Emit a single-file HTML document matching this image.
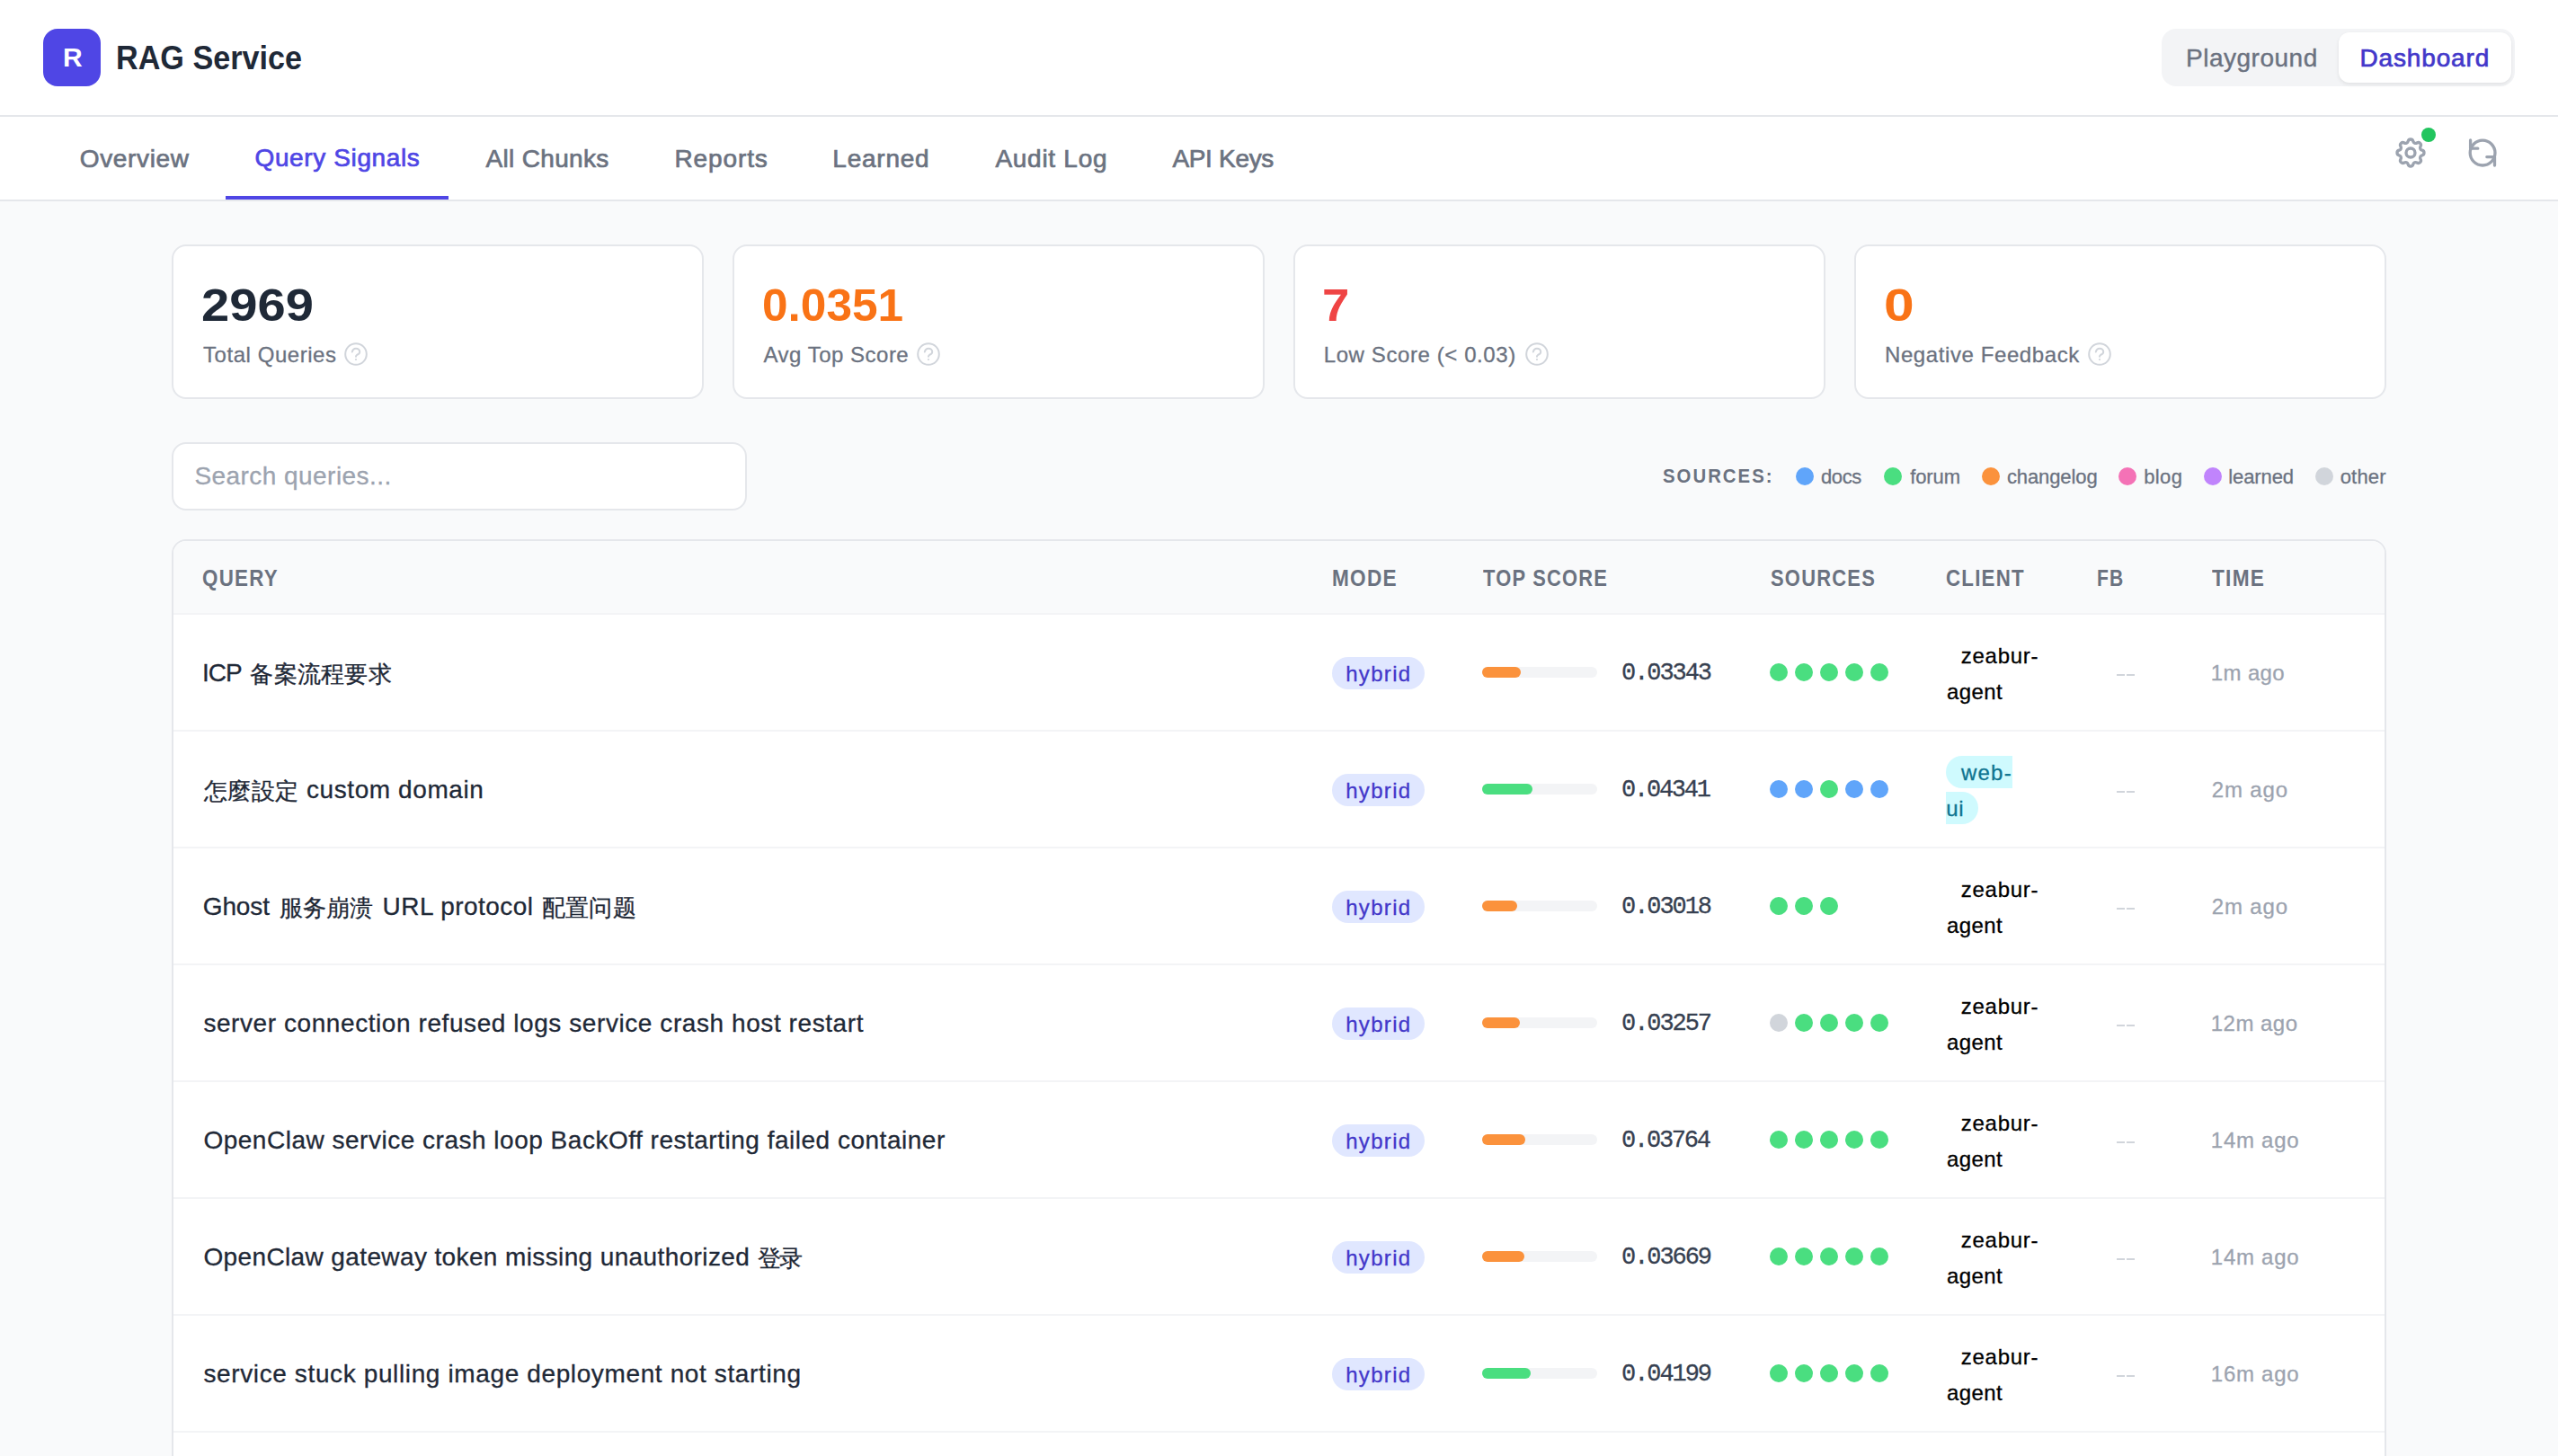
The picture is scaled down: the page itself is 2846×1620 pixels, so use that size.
<!DOCTYPE html>
<html><head><meta charset="utf-8"><title>RAG Service</title>
<style>
html{zoom:1;}
@media (min-width:2000px){html{zoom:2;}}
body{margin:0;width:1423px;height:810px;overflow:hidden;background:#f9fafb;position:relative;font-family:"Liberation Sans",sans-serif;}
.a{position:absolute;}
.t{position:absolute;white-space:nowrap;}
</style></head><body>
<div class="a" style="left:0px;top:0px;width:1423px;height:64px;background:#fff;"></div>
<div class="a" style="left:0px;top:64px;width:1423px;height:1px;background:#e5e7eb;"></div>
<div class="a" style="left:24px;top:16px;width:32px;height:32px;background:#4f46e5;border-radius:8px;"></div>
<div class="t" id="t1" style="left:35.05px;top:24.50px;font-size:15px;line-height:15px;color:#fff;font-weight:700;">R</div>
<div class="t" id="t2" style="left:64.50px;top:23.56px;font-size:18px;line-height:18px;color:#1f2937;font-weight:700;transform:scaleX(0.9493);transform-origin:0 0;">RAG Service</div>
<div class="a" style="left:1202.5px;top:16px;width:196.5px;height:32px;background:#f3f4f6;border-radius:8px;"></div>
<div class="a" style="left:1301px;top:18px;width:96px;height:28px;background:#fff;border-radius:6px;box-shadow:0 1px 2px rgba(0,0,0,0.08);"></div>
<div class="t" id="t3" style="left:1216.00px;top:25.45px;font-size:14px;line-height:14px;color:#6b7280;letter-spacing:0.256px;-webkit-text-stroke:0.2px #6b7280;">Playground</div>
<div class="t" id="t4" style="left:1312.75px;top:25.45px;font-size:14px;line-height:14px;color:#4338ca;letter-spacing:0.425px;-webkit-text-stroke:0.35px #4338ca;">Dashboard</div>
<div class="a" style="left:0px;top:65px;width:1423px;height:46px;background:#fff;"></div>
<div class="a" style="left:0px;top:111px;width:1423px;height:1px;background:#e5e7eb;"></div>
<div class="t" id="t5" style="left:44.38px;top:81.55px;font-size:14px;line-height:14px;color:#6b7280;letter-spacing:0.321px;-webkit-text-stroke:0.35px #6b7280;">Overview</div>
<div class="t" id="t6" style="left:141.75px;top:80.95px;font-size:14px;line-height:14px;color:#4f46e5;letter-spacing:0.312px;-webkit-text-stroke:0.35px #4f46e5;">Query Signals</div>
<div class="t" id="t7" style="left:270.25px;top:81.55px;font-size:14px;line-height:14px;color:#6b7280;letter-spacing:0.167px;-webkit-text-stroke:0.35px #6b7280;">All Chunks</div>
<div class="t" id="t8" style="left:375.20px;top:81.55px;font-size:14px;line-height:14px;color:#6b7280;letter-spacing:0.450px;-webkit-text-stroke:0.35px #6b7280;">Reports</div>
<div class="t" id="t9" style="left:463.15px;top:81.55px;font-size:14px;line-height:14px;color:#6b7280;letter-spacing:0.383px;-webkit-text-stroke:0.35px #6b7280;">Learned</div>
<div class="t" id="t10" style="left:553.70px;top:81.55px;font-size:14px;line-height:14px;color:#6b7280;letter-spacing:0.363px;-webkit-text-stroke:0.35px #6b7280;">Audit Log</div>
<div class="t" id="t11" style="left:652.20px;top:81.55px;font-size:14px;line-height:14px;color:#6b7280;letter-spacing:-0.157px;-webkit-text-stroke:0.35px #6b7280;">API Keys</div>
<div class="a" style="left:125.5px;top:109px;width:124px;height:2px;background:#4f46e5;"></div>
<svg class="a" style="left:1331px;top:75px" width="20" height="20" viewBox="0 0 24 24" fill="none" stroke="#9ca3af" stroke-width="2" stroke-linecap="round" stroke-linejoin="round"><path d="M10.325 4.317c.426-1.756 2.924-1.756 3.35 0a1.724 1.724 0 002.573 1.066c1.543-.94 3.31.826 2.37 2.37a1.724 1.724 0 001.065 2.572c1.756.426 1.756 2.924 0 3.35a1.724 1.724 0 00-1.066 2.573c.94 1.543-.826 3.31-2.37 2.37a1.724 1.724 0 00-2.572 1.065c-.426 1.756-2.924 1.756-3.35 0a1.724 1.724 0 00-2.573-1.066c-1.543.94-3.31-.826-2.37-2.37a1.724 1.724 0 00-1.065-2.572c-1.756-.426-1.756-2.924 0-3.35a1.724 1.724 0 001.066-2.573c-.94-1.543.826-3.31 2.37-2.37.996.608 2.296.07 2.572-1.065z"/><path d="M15 12a3 3 0 11-6 0 3 3 0 016 0z"/></svg>
<div class="a" style="left:1347px;top:71px;width:8px;height:8px;background:#22c55e;border-radius:50%;"></div>
<svg class="a" style="left:1371px;top:75px" width="20" height="20" viewBox="0 0 20 20" fill="none" stroke="#9ca3af" stroke-width="1.65" stroke-linecap="round" stroke-linejoin="round"><circle cx="10.05" cy="10.05" r="6.95"/><path d="M3.3 2.95V7.6H7.4"/><path d="M16.75 17V12.3H12.4"/></svg>
<div class="a" style="left:95.5px;top:136px;width:296px;height:86px;background:#fff;border:1px solid #e5e7eb;border-radius:8px;box-sizing:border-box;"></div>
<div class="t" id="t12" style="left:112.15px;top:157.33px;font-size:25px;line-height:25px;color:#1f2937;font-weight:700;transform:scaleX(1.1225);transform-origin:0 0;">2969</div>
<div class="t" id="t13" style="left:113.00px;top:191.39px;font-size:12px;line-height:12px;color:#6b7280;letter-spacing:0.275px;-webkit-text-stroke:0.15px #6b7280;">Total Queries</div>
<svg class="a" style="left:190.025px;top:188.95px" width="16" height="16" viewBox="-8 -8 16 16" fill="none" stroke="#d1d5db" stroke-width="1" stroke-linecap="round"><circle cx="0" cy="0" r="5.9"/><path d="M-2.1 -1.2C-1.8 -2.5 -1 -3.1 0 -3.1C1.2 -3.1 2.1 -2.3 2.1 -1.3C2.1 -0.4 1.4 0.1 0.6 0.4C0.2 0.6 0 0.9 0 1.4"/><circle cx="0" cy="3" r="0.55" fill="#d1d5db" stroke="none"/></svg>
<div class="a" style="left:407.5px;top:136px;width:296px;height:86px;background:#fff;border:1px solid #e5e7eb;border-radius:8px;box-sizing:border-box;"></div>
<div class="t" id="t14" style="left:424.00px;top:157.33px;font-size:25px;line-height:25px;color:#f97316;font-weight:700;transform:scaleX(1.0277);transform-origin:0 0;">0.0351</div>
<div class="t" id="t15" style="left:424.75px;top:191.39px;font-size:12px;line-height:12px;color:#6b7280;letter-spacing:0.250px;-webkit-text-stroke:0.15px #6b7280;">Avg Top Score</div>
<svg class="a" style="left:508.5px;top:188.95px" width="16" height="16" viewBox="-8 -8 16 16" fill="none" stroke="#d1d5db" stroke-width="1" stroke-linecap="round"><circle cx="0" cy="0" r="5.9"/><path d="M-2.1 -1.2C-1.8 -2.5 -1 -3.1 0 -3.1C1.2 -3.1 2.1 -2.3 2.1 -1.3C2.1 -0.4 1.4 0.1 0.6 0.4C0.2 0.6 0 0.9 0 1.4"/><circle cx="0" cy="3" r="0.55" fill="#d1d5db" stroke="none"/></svg>
<div class="a" style="left:719.5px;top:136px;width:296px;height:86px;background:#fff;border:1px solid #e5e7eb;border-radius:8px;box-sizing:border-box;"></div>
<div class="t" id="t16" style="left:735.62px;top:157.33px;font-size:25px;line-height:25px;color:#ef4444;font-weight:700;transform:scaleX(1.0911);transform-origin:0 0;">7</div>
<div class="t" id="t17" style="left:736.38px;top:191.39px;font-size:12px;line-height:12px;color:#6b7280;letter-spacing:0.294px;-webkit-text-stroke:0.15px #6b7280;">Low Score (&lt; 0.03)</div>
<svg class="a" style="left:846.875px;top:188.95px" width="16" height="16" viewBox="-8 -8 16 16" fill="none" stroke="#d1d5db" stroke-width="1" stroke-linecap="round"><circle cx="0" cy="0" r="5.9"/><path d="M-2.1 -1.2C-1.8 -2.5 -1 -3.1 0 -3.1C1.2 -3.1 2.1 -2.3 2.1 -1.3C2.1 -0.4 1.4 0.1 0.6 0.4C0.2 0.6 0 0.9 0 1.4"/><circle cx="0" cy="3" r="0.55" fill="#d1d5db" stroke="none"/></svg>
<div class="a" style="left:1031.5px;top:136px;width:296px;height:86px;background:#fff;border:1px solid #e5e7eb;border-radius:8px;box-sizing:border-box;"></div>
<div class="t" id="t18" style="left:1048.00px;top:157.33px;font-size:25px;line-height:25px;color:#f97316;font-weight:700;transform:scaleX(1.2111);transform-origin:0 0;">0</div>
<div class="t" id="t19" style="left:1048.50px;top:191.39px;font-size:12px;line-height:12px;color:#6b7280;letter-spacing:0.297px;-webkit-text-stroke:0.15px #6b7280;">Negative Feedback</div>
<svg class="a" style="left:1159.875px;top:188.95px" width="16" height="16" viewBox="-8 -8 16 16" fill="none" stroke="#d1d5db" stroke-width="1" stroke-linecap="round"><circle cx="0" cy="0" r="5.9"/><path d="M-2.1 -1.2C-1.8 -2.5 -1 -3.1 0 -3.1C1.2 -3.1 2.1 -2.3 2.1 -1.3C2.1 -0.4 1.4 0.1 0.6 0.4C0.2 0.6 0 0.9 0 1.4"/><circle cx="0" cy="3" r="0.55" fill="#d1d5db" stroke="none"/></svg>
<div class="a" style="left:95.5px;top:246px;width:320px;height:38px;background:#fff;border:1px solid #e5e7eb;border-radius:8px;box-sizing:border-box;"></div>
<div class="t" id="t20" style="left:108.20px;top:258.15px;font-size:14px;line-height:14px;color:#9ca3af;letter-spacing:0.225px;-webkit-text-stroke:0.15px #9ca3af;">Search queries...</div>
<div class="t" id="t21" style="left:925.20px;top:259.39px;font-size:11px;line-height:11px;color:#6b7280;font-weight:700;letter-spacing:1.100px;transform:scaleX(0.9241);transform-origin:0 0;">SOURCES:</div>
<div class="a" style="left:998.9px;top:260px;width:10px;height:10px;background:#60a5fa;border-radius:50%;"></div>
<div class="t" id="t22" style="left:1013.00px;top:259.84px;font-size:11px;line-height:11px;color:#6b7280;letter-spacing:-0.200px;-webkit-text-stroke:0.15px #6b7280;">docs</div>
<div class="a" style="left:1048px;top:260px;width:10px;height:10px;background:#4ade80;border-radius:50%;"></div>
<div class="t" id="t23" style="left:1062.60px;top:259.84px;font-size:11px;line-height:11px;color:#6b7280;letter-spacing:-0.050px;-webkit-text-stroke:0.15px #6b7280;">forum</div>
<div class="a" style="left:1102.5px;top:260px;width:10px;height:10px;background:#fb923c;border-radius:50%;"></div>
<div class="t" id="t24" style="left:1116.45px;top:259.84px;font-size:11px;line-height:11px;color:#6b7280;letter-spacing:-0.050px;-webkit-text-stroke:0.15px #6b7280;">changelog</div>
<div class="a" style="left:1178.5px;top:260px;width:10px;height:10px;background:#f472b6;border-radius:50%;"></div>
<div class="t" id="t25" style="left:1192.65px;top:259.84px;font-size:11px;line-height:11px;color:#6b7280;letter-spacing:0.167px;-webkit-text-stroke:0.15px #6b7280;">blog</div>
<div class="a" style="left:1226px;top:260px;width:10px;height:10px;background:#c084fc;border-radius:50%;"></div>
<div class="t" id="t26" style="left:1239.65px;top:259.84px;font-size:11px;line-height:11px;color:#6b7280;letter-spacing:-0.050px;-webkit-text-stroke:0.15px #6b7280;">learned</div>
<div class="a" style="left:1288px;top:260px;width:10px;height:10px;background:#d1d5db;border-radius:50%;"></div>
<div class="t" id="t27" style="left:1301.85px;top:259.84px;font-size:11px;line-height:11px;color:#6b7280;letter-spacing:0.100px;-webkit-text-stroke:0.15px #6b7280;">other</div>
<div class="a" style="left:95.5px;top:300px;width:1232px;height:520px;background:#fff;border:1px solid #e5e7eb;border-radius:8px;box-sizing:border-box;overflow:hidden;"></div>
<div class="a" style="left:96.5px;top:301px;width:1230px;height:40px;background:#f9fafb;border-radius:7px 7px 0 0;"></div>
<div class="a" style="left:96.5px;top:341px;width:1230px;height:1px;background:#f3f4f6;"></div>
<div class="t" id="t28" style="left:112.60px;top:315.27px;font-size:12.5px;line-height:12.5px;color:#6b7280;font-weight:700;letter-spacing:0.700px;transform:scaleX(0.8947);transform-origin:0 0;">QUERY</div>
<div class="t" id="t29" style="left:740.88px;top:315.27px;font-size:12.5px;line-height:12.5px;color:#6b7280;font-weight:700;letter-spacing:0.700px;transform:scaleX(0.9039);transform-origin:0 0;">MODE</div>
<div class="t" id="t30" style="left:825.00px;top:315.27px;font-size:12.5px;line-height:12.5px;color:#6b7280;font-weight:700;letter-spacing:0.700px;transform:scaleX(0.8758);transform-origin:0 0;">TOP SCORE</div>
<div class="t" id="t31" style="left:985.00px;top:315.27px;font-size:12.5px;line-height:12.5px;color:#6b7280;font-weight:700;letter-spacing:0.700px;transform:scaleX(0.8770);transform-origin:0 0;">SOURCES</div>
<div class="t" id="t32" style="left:1082.38px;top:315.27px;font-size:12.5px;line-height:12.5px;color:#6b7280;font-weight:700;letter-spacing:0.700px;transform:scaleX(0.8907);transform-origin:0 0;">CLIENT</div>
<div class="t" id="t33" style="left:1166.38px;top:315.27px;font-size:12.5px;line-height:12.5px;color:#6b7280;font-weight:700;letter-spacing:0.700px;transform:scaleX(0.8414);transform-origin:0 0;">FB</div>
<div class="t" id="t34" style="left:1230.62px;top:315.27px;font-size:12.5px;line-height:12.5px;color:#6b7280;font-weight:700;letter-spacing:0.700px;transform:scaleX(0.9048);transform-origin:0 0;">TIME</div>
<div class="a" style="left:96.5px;top:406px;width:1230px;height:1px;background:#f3f4f6;"></div>
<div class="t" id="q0_0" style="left:112.55px;top:367.45px;font-size:14px;line-height:14px;color:#1f2937;letter-spacing:-0.550px;-webkit-text-stroke:0.15px #1f2937;">ICP</div>
<div class="t" id="q0_1" style="left:139.12px;top:368.29px;font-size:13px;line-height:13px;color:#1f2937;letter-spacing:0.150px;-webkit-text-stroke:0.15px #1f2937;">备案流程要求</div>
<div class="a" style="left:741px;top:365.5px;width:51.5px;height:18px;background:#e0e7ff;border-radius:9px;"></div>
<div class="t" id="h0" style="left:748.60px;top:369.19px;font-size:12px;line-height:12px;color:#4338ca;letter-spacing:0.660px;-webkit-text-stroke:0.15px #4338ca;">hybrid</div>
<div class="a" style="left:824.5px;top:371px;width:64px;height:6px;background:#f3f4f6;border-radius:3px;"></div>
<div class="a" style="left:824.5px;top:371px;width:21.4px;height:6px;background:#fb923c;border-radius:3px;"></div>
<div class="t" id="s0" style="left:902.00px;top:368.16px;font-size:13.5px;line-height:13.5px;color:#374151;font-family:'Liberation Mono',monospace;letter-spacing:-1.033px;-webkit-text-stroke:0.15px #374151;">0.03343</div>
<div class="a" style="left:984.5px;top:369px;width:10px;height:10px;background:#4ade80;border-radius:50%;"></div>
<div class="a" style="left:998.5px;top:369px;width:10px;height:10px;background:#4ade80;border-radius:50%;"></div>
<div class="a" style="left:1012.5px;top:369px;width:10px;height:10px;background:#4ade80;border-radius:50%;"></div>
<div class="a" style="left:1026.5px;top:369px;width:10px;height:10px;background:#4ade80;border-radius:50%;"></div>
<div class="a" style="left:1040.5px;top:369px;width:10px;height:10px;background:#4ade80;border-radius:50%;"></div>
<div class="t" id="z0" style="left:1090.85px;top:359.14px;font-size:12px;line-height:12px;color:#000;letter-spacing:0.375px;-webkit-text-stroke:0.15px #000;">zeabur-</div>
<div class="t" id="a0" style="left:1083.00px;top:379.14px;font-size:12px;line-height:12px;color:#000;letter-spacing:0.188px;-webkit-text-stroke:0.15px #000;">agent</div>
<div class="a" style="left:1177.55px;top:374.97px;width:4.35px;height:1.05px;background:#d1d5db;"></div>
<div class="a" style="left:1183.1px;top:374.97px;width:4.35px;height:1.05px;background:#d1d5db;"></div>
<div class="t" id="tm0" style="left:1229.90px;top:368.54px;font-size:12px;line-height:12px;color:#9ca3af;letter-spacing:0.180px;-webkit-text-stroke:0.15px #9ca3af;">1m ago</div>
<div class="a" style="left:96.5px;top:471px;width:1230px;height:1px;background:#f3f4f6;"></div>
<div class="t" id="q1_0" style="left:113.38px;top:433.29px;font-size:13px;line-height:13px;color:#1f2937;letter-spacing:0.217px;-webkit-text-stroke:0.15px #1f2937;">怎麼設定</div>
<div class="t" id="q1_1" style="left:170.50px;top:432.45px;font-size:14px;line-height:14px;color:#1f2937;letter-spacing:0.292px;-webkit-text-stroke:0.15px #1f2937;">custom domain</div>
<div class="a" style="left:741px;top:430.5px;width:51.5px;height:18px;background:#e0e7ff;border-radius:9px;"></div>
<div class="t" id="h1" style="left:748.60px;top:434.19px;font-size:12px;line-height:12px;color:#4338ca;letter-spacing:0.660px;-webkit-text-stroke:0.15px #4338ca;">hybrid</div>
<div class="a" style="left:824.5px;top:436px;width:64px;height:6px;background:#f3f4f6;border-radius:3px;"></div>
<div class="a" style="left:824.5px;top:436px;width:27.78px;height:6px;background:#4ade80;border-radius:3px;"></div>
<div class="t" id="s1" style="left:902.00px;top:433.16px;font-size:13.5px;line-height:13.5px;color:#374151;font-family:'Liberation Mono',monospace;letter-spacing:-1.117px;-webkit-text-stroke:0.15px #374151;">0.04341</div>
<div class="a" style="left:984.5px;top:434px;width:10px;height:10px;background:#60a5fa;border-radius:50%;"></div>
<div class="a" style="left:998.5px;top:434px;width:10px;height:10px;background:#60a5fa;border-radius:50%;"></div>
<div class="a" style="left:1012.5px;top:434px;width:10px;height:10px;background:#4ade80;border-radius:50%;"></div>
<div class="a" style="left:1026.5px;top:434px;width:10px;height:10px;background:#60a5fa;border-radius:50%;"></div>
<div class="a" style="left:1040.5px;top:434px;width:10px;height:10px;background:#60a5fa;border-radius:50%;"></div>
<div class="a" style="left:1082.6px;top:420.5px;width:36.8px;height:17.8px;background:#cffafe;border-radius:9px 0 0 9px;"></div>
<div class="a" style="left:1082.6px;top:440.6px;width:17.8px;height:17.8px;background:#cffafe;border-radius:0 9px 9px 0;"></div>
<div class="t" id="web" style="left:1091.00px;top:424.14px;font-size:12px;line-height:12px;color:#0e7490;letter-spacing:0.600px;-webkit-text-stroke:0.15px #0e7490;">web-</div>
<div class="t" id="ui" style="left:1082.60px;top:444.14px;font-size:12px;line-height:12px;color:#0e7490;letter-spacing:0.400px;-webkit-text-stroke:0.15px #0e7490;">ui</div>
<div class="a" style="left:1177.55px;top:439.97px;width:4.35px;height:1.05px;background:#d1d5db;"></div>
<div class="a" style="left:1183.1px;top:439.97px;width:4.35px;height:1.05px;background:#d1d5db;"></div>
<div class="t" id="tm1" style="left:1230.40px;top:433.54px;font-size:12px;line-height:12px;color:#9ca3af;letter-spacing:0.420px;-webkit-text-stroke:0.15px #9ca3af;">2m ago</div>
<div class="a" style="left:96.5px;top:536px;width:1230px;height:1px;background:#f3f4f6;"></div>
<div class="t" id="q2_0" style="left:112.88px;top:497.45px;font-size:14px;line-height:14px;color:#1f2937;letter-spacing:-0.062px;-webkit-text-stroke:0.15px #1f2937;">Ghost</div>
<div class="t" id="q2_1" style="left:155.50px;top:498.29px;font-size:13px;line-height:13px;color:#1f2937;letter-spacing:0.083px;-webkit-text-stroke:0.15px #1f2937;">服务崩溃</div>
<div class="t" id="q2_2" style="left:212.75px;top:497.45px;font-size:14px;line-height:14px;color:#1f2937;letter-spacing:0.236px;-webkit-text-stroke:0.15px #1f2937;">URL protocol</div>
<div class="t" id="q2_3" style="left:301.25px;top:498.29px;font-size:13px;line-height:13px;color:#1f2937;letter-spacing:0.200px;-webkit-text-stroke:0.15px #1f2937;">配置问题</div>
<div class="a" style="left:741px;top:495.5px;width:51.5px;height:18px;background:#e0e7ff;border-radius:9px;"></div>
<div class="t" id="h2" style="left:748.60px;top:499.19px;font-size:12px;line-height:12px;color:#4338ca;letter-spacing:0.660px;-webkit-text-stroke:0.15px #4338ca;">hybrid</div>
<div class="a" style="left:824.5px;top:501px;width:64px;height:6px;background:#f3f4f6;border-radius:3px;"></div>
<div class="a" style="left:824.5px;top:501px;width:19.32px;height:6px;background:#fb923c;border-radius:3px;"></div>
<div class="t" id="s2" style="left:902.00px;top:498.16px;font-size:13.5px;line-height:13.5px;color:#374151;font-family:'Liberation Mono',monospace;letter-spacing:-1.033px;-webkit-text-stroke:0.15px #374151;">0.03018</div>
<div class="a" style="left:984.5px;top:499px;width:10px;height:10px;background:#4ade80;border-radius:50%;"></div>
<div class="a" style="left:998.5px;top:499px;width:10px;height:10px;background:#4ade80;border-radius:50%;"></div>
<div class="a" style="left:1012.5px;top:499px;width:10px;height:10px;background:#4ade80;border-radius:50%;"></div>
<div class="t" id="z2" style="left:1090.85px;top:489.14px;font-size:12px;line-height:12px;color:#000;letter-spacing:0.375px;-webkit-text-stroke:0.15px #000;">zeabur-</div>
<div class="t" id="a2" style="left:1083.00px;top:509.14px;font-size:12px;line-height:12px;color:#000;letter-spacing:0.188px;-webkit-text-stroke:0.15px #000;">agent</div>
<div class="a" style="left:1177.55px;top:504.97px;width:4.35px;height:1.05px;background:#d1d5db;"></div>
<div class="a" style="left:1183.1px;top:504.97px;width:4.35px;height:1.05px;background:#d1d5db;"></div>
<div class="t" id="tm2" style="left:1230.40px;top:498.54px;font-size:12px;line-height:12px;color:#9ca3af;letter-spacing:0.420px;-webkit-text-stroke:0.15px #9ca3af;">2m ago</div>
<div class="a" style="left:96.5px;top:601px;width:1230px;height:1px;background:#f3f4f6;"></div>
<div class="t" id="q3_0" style="left:113.20px;top:562.45px;font-size:14px;line-height:14px;color:#1f2937;letter-spacing:0.287px;-webkit-text-stroke:0.15px #1f2937;">server connection refused logs service crash host restart</div>
<div class="a" style="left:741px;top:560.5px;width:51.5px;height:18px;background:#e0e7ff;border-radius:9px;"></div>
<div class="t" id="h3" style="left:748.60px;top:564.19px;font-size:12px;line-height:12px;color:#4338ca;letter-spacing:0.660px;-webkit-text-stroke:0.15px #4338ca;">hybrid</div>
<div class="a" style="left:824.5px;top:566px;width:64px;height:6px;background:#f3f4f6;border-radius:3px;"></div>
<div class="a" style="left:824.5px;top:566px;width:20.84px;height:6px;background:#fb923c;border-radius:3px;"></div>
<div class="t" id="s3" style="left:902.00px;top:563.16px;font-size:13.5px;line-height:13.5px;color:#374151;font-family:'Liberation Mono',monospace;letter-spacing:-1.033px;-webkit-text-stroke:0.15px #374151;">0.03257</div>
<div class="a" style="left:984.5px;top:564px;width:10px;height:10px;background:#d1d5db;border-radius:50%;"></div>
<div class="a" style="left:998.5px;top:564px;width:10px;height:10px;background:#4ade80;border-radius:50%;"></div>
<div class="a" style="left:1012.5px;top:564px;width:10px;height:10px;background:#4ade80;border-radius:50%;"></div>
<div class="a" style="left:1026.5px;top:564px;width:10px;height:10px;background:#4ade80;border-radius:50%;"></div>
<div class="a" style="left:1040.5px;top:564px;width:10px;height:10px;background:#4ade80;border-radius:50%;"></div>
<div class="t" id="z3" style="left:1090.85px;top:554.14px;font-size:12px;line-height:12px;color:#000;letter-spacing:0.375px;-webkit-text-stroke:0.15px #000;">zeabur-</div>
<div class="t" id="a3" style="left:1083.00px;top:574.14px;font-size:12px;line-height:12px;color:#000;letter-spacing:0.188px;-webkit-text-stroke:0.15px #000;">agent</div>
<div class="a" style="left:1177.55px;top:569.97px;width:4.35px;height:1.05px;background:#d1d5db;"></div>
<div class="a" style="left:1183.1px;top:569.97px;width:4.35px;height:1.05px;background:#d1d5db;"></div>
<div class="t" id="tm3" style="left:1229.90px;top:563.54px;font-size:12px;line-height:12px;color:#9ca3af;letter-spacing:0.233px;-webkit-text-stroke:0.15px #9ca3af;">12m ago</div>
<div class="a" style="left:96.5px;top:666px;width:1230px;height:1px;background:#f3f4f6;"></div>
<div class="t" id="q4_0" style="left:113.20px;top:627.45px;font-size:14px;line-height:14px;color:#1f2937;letter-spacing:0.255px;-webkit-text-stroke:0.15px #1f2937;">OpenClaw service crash loop BackOff restarting failed container</div>
<div class="a" style="left:741px;top:625.5px;width:51.5px;height:18px;background:#e0e7ff;border-radius:9px;"></div>
<div class="t" id="h4" style="left:748.60px;top:629.19px;font-size:12px;line-height:12px;color:#4338ca;letter-spacing:0.660px;-webkit-text-stroke:0.15px #4338ca;">hybrid</div>
<div class="a" style="left:824.5px;top:631px;width:64px;height:6px;background:#f3f4f6;border-radius:3px;"></div>
<div class="a" style="left:824.5px;top:631px;width:24.09px;height:6px;background:#fb923c;border-radius:3px;"></div>
<div class="t" id="s4" style="left:902.00px;top:628.16px;font-size:13.5px;line-height:13.5px;color:#374151;font-family:'Liberation Mono',monospace;letter-spacing:-1.117px;-webkit-text-stroke:0.15px #374151;">0.03764</div>
<div class="a" style="left:984.5px;top:629px;width:10px;height:10px;background:#4ade80;border-radius:50%;"></div>
<div class="a" style="left:998.5px;top:629px;width:10px;height:10px;background:#4ade80;border-radius:50%;"></div>
<div class="a" style="left:1012.5px;top:629px;width:10px;height:10px;background:#4ade80;border-radius:50%;"></div>
<div class="a" style="left:1026.5px;top:629px;width:10px;height:10px;background:#4ade80;border-radius:50%;"></div>
<div class="a" style="left:1040.5px;top:629px;width:10px;height:10px;background:#4ade80;border-radius:50%;"></div>
<div class="t" id="z4" style="left:1090.85px;top:619.14px;font-size:12px;line-height:12px;color:#000;letter-spacing:0.375px;-webkit-text-stroke:0.15px #000;">zeabur-</div>
<div class="t" id="a4" style="left:1083.00px;top:639.14px;font-size:12px;line-height:12px;color:#000;letter-spacing:0.188px;-webkit-text-stroke:0.15px #000;">agent</div>
<div class="a" style="left:1177.55px;top:634.97px;width:4.35px;height:1.05px;background:#d1d5db;"></div>
<div class="a" style="left:1183.1px;top:634.97px;width:4.35px;height:1.05px;background:#d1d5db;"></div>
<div class="t" id="tm4" style="left:1229.90px;top:628.54px;font-size:12px;line-height:12px;color:#9ca3af;letter-spacing:0.367px;-webkit-text-stroke:0.15px #9ca3af;">14m ago</div>
<div class="a" style="left:96.5px;top:731px;width:1230px;height:1px;background:#f3f4f6;"></div>
<div class="t" id="q5_0" style="left:113.20px;top:692.45px;font-size:14px;line-height:14px;color:#1f2937;letter-spacing:0.190px;-webkit-text-stroke:0.15px #1f2937;">OpenClaw gateway token missing unauthorized</div>
<div class="t" id="q5_1" style="left:421.62px;top:693.29px;font-size:13px;line-height:13px;color:#1f2937;letter-spacing:-1.000px;-webkit-text-stroke:0.15px #1f2937;">登录</div>
<div class="a" style="left:741px;top:690.5px;width:51.5px;height:18px;background:#e0e7ff;border-radius:9px;"></div>
<div class="t" id="h5" style="left:748.60px;top:694.19px;font-size:12px;line-height:12px;color:#4338ca;letter-spacing:0.660px;-webkit-text-stroke:0.15px #4338ca;">hybrid</div>
<div class="a" style="left:824.5px;top:696px;width:64px;height:6px;background:#f3f4f6;border-radius:3px;"></div>
<div class="a" style="left:824.5px;top:696px;width:23.48px;height:6px;background:#fb923c;border-radius:3px;"></div>
<div class="t" id="s5" style="left:902.00px;top:693.16px;font-size:13.5px;line-height:13.5px;color:#374151;font-family:'Liberation Mono',monospace;letter-spacing:-1.033px;-webkit-text-stroke:0.15px #374151;">0.03669</div>
<div class="a" style="left:984.5px;top:694px;width:10px;height:10px;background:#4ade80;border-radius:50%;"></div>
<div class="a" style="left:998.5px;top:694px;width:10px;height:10px;background:#4ade80;border-radius:50%;"></div>
<div class="a" style="left:1012.5px;top:694px;width:10px;height:10px;background:#4ade80;border-radius:50%;"></div>
<div class="a" style="left:1026.5px;top:694px;width:10px;height:10px;background:#4ade80;border-radius:50%;"></div>
<div class="a" style="left:1040.5px;top:694px;width:10px;height:10px;background:#4ade80;border-radius:50%;"></div>
<div class="t" id="z5" style="left:1090.85px;top:684.14px;font-size:12px;line-height:12px;color:#000;letter-spacing:0.375px;-webkit-text-stroke:0.15px #000;">zeabur-</div>
<div class="t" id="a5" style="left:1083.00px;top:704.14px;font-size:12px;line-height:12px;color:#000;letter-spacing:0.188px;-webkit-text-stroke:0.15px #000;">agent</div>
<div class="a" style="left:1177.55px;top:699.97px;width:4.35px;height:1.05px;background:#d1d5db;"></div>
<div class="a" style="left:1183.1px;top:699.97px;width:4.35px;height:1.05px;background:#d1d5db;"></div>
<div class="t" id="tm5" style="left:1229.90px;top:693.54px;font-size:12px;line-height:12px;color:#9ca3af;letter-spacing:0.367px;-webkit-text-stroke:0.15px #9ca3af;">14m ago</div>
<div class="a" style="left:96.5px;top:796px;width:1230px;height:1px;background:#f3f4f6;"></div>
<div class="t" id="q6_0" style="left:113.20px;top:757.45px;font-size:14px;line-height:14px;color:#1f2937;letter-spacing:0.312px;-webkit-text-stroke:0.15px #1f2937;">service stuck pulling image deployment not starting</div>
<div class="a" style="left:741px;top:755.5px;width:51.5px;height:18px;background:#e0e7ff;border-radius:9px;"></div>
<div class="t" id="h6" style="left:748.60px;top:759.19px;font-size:12px;line-height:12px;color:#4338ca;letter-spacing:0.660px;-webkit-text-stroke:0.15px #4338ca;">hybrid</div>
<div class="a" style="left:824.5px;top:761px;width:64px;height:6px;background:#f3f4f6;border-radius:3px;"></div>
<div class="a" style="left:824.5px;top:761px;width:26.87px;height:6px;background:#4ade80;border-radius:3px;"></div>
<div class="t" id="s6" style="left:902.00px;top:758.16px;font-size:13.5px;line-height:13.5px;color:#374151;font-family:'Liberation Mono',monospace;letter-spacing:-1.033px;-webkit-text-stroke:0.15px #374151;">0.04199</div>
<div class="a" style="left:984.5px;top:759px;width:10px;height:10px;background:#4ade80;border-radius:50%;"></div>
<div class="a" style="left:998.5px;top:759px;width:10px;height:10px;background:#4ade80;border-radius:50%;"></div>
<div class="a" style="left:1012.5px;top:759px;width:10px;height:10px;background:#4ade80;border-radius:50%;"></div>
<div class="a" style="left:1026.5px;top:759px;width:10px;height:10px;background:#4ade80;border-radius:50%;"></div>
<div class="a" style="left:1040.5px;top:759px;width:10px;height:10px;background:#4ade80;border-radius:50%;"></div>
<div class="t" id="z6" style="left:1090.85px;top:749.14px;font-size:12px;line-height:12px;color:#000;letter-spacing:0.375px;-webkit-text-stroke:0.15px #000;">zeabur-</div>
<div class="t" id="a6" style="left:1083.00px;top:769.14px;font-size:12px;line-height:12px;color:#000;letter-spacing:0.188px;-webkit-text-stroke:0.15px #000;">agent</div>
<div class="a" style="left:1177.55px;top:764.97px;width:4.35px;height:1.05px;background:#d1d5db;"></div>
<div class="a" style="left:1183.1px;top:764.97px;width:4.35px;height:1.05px;background:#d1d5db;"></div>
<div class="t" id="tm6" style="left:1229.90px;top:758.54px;font-size:12px;line-height:12px;color:#9ca3af;letter-spacing:0.367px;-webkit-text-stroke:0.15px #9ca3af;">16m ago</div>
</body></html>
